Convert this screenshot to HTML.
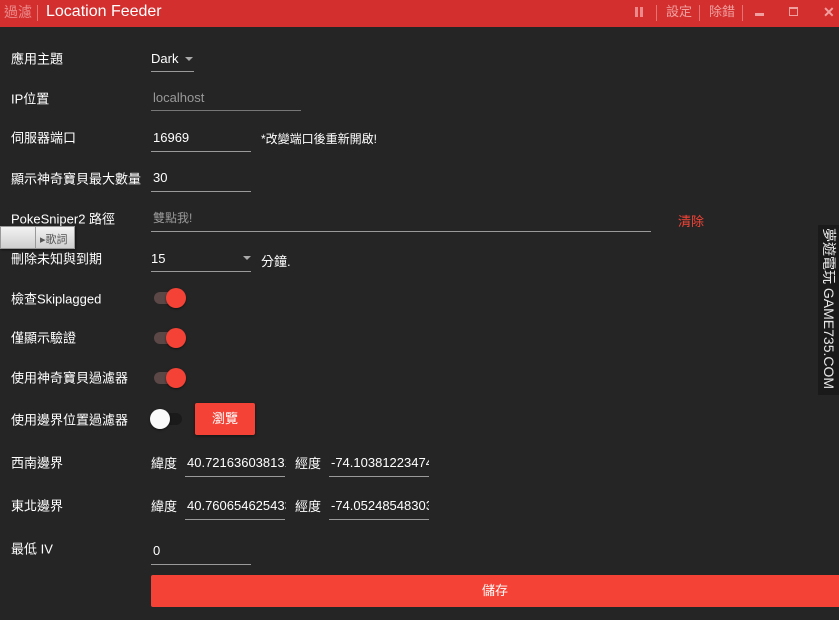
<!DOCTYPE html>
<html><head><meta charset="utf-8"><style>
*{margin:0;padding:0;box-sizing:border-box}
body{width:839px;height:620px;background:#252525;position:relative;overflow:hidden;font-family:"Liberation Sans","Noto Sans CJK TC",sans-serif;color:#fff;font-size:13px}
.a{position:absolute;white-space:nowrap}
.tb{position:absolute;left:0;top:0;width:839px;height:27px;background:#d32f2f}
.ul{position:absolute;height:1px;background:#9a9a9a}
.lbl{position:absolute;left:11px;transform:translateY(-50%)}
.tg{position:absolute;width:28px;height:12px;border-radius:6px;background:#5a4746}
.kn{position:absolute;width:20px;height:20px;border-radius:50%;background:#f44336;box-shadow:0 1px 2px rgba(0,0,0,.5)}
.sep{position:absolute;top:5px;width:1px;height:16px;background:#e57373}
.t{line-height:20px}
</style></head><body>
<div class="tb"></div>
<div class="a t" style="left:4px;top:2px;font-size:14px;color:#eb8a8a">過濾</div>
<div class="sep" style="left:37px"></div>
<div class="a t" style="left:46px;top:2px;font-size:16px;color:#fff">Location Feeder</div>
<div class="a" style="left:635px;top:7px;width:3px;height:10px;background:#eb8a8a"></div>
<div class="a" style="left:640px;top:7px;width:3px;height:10px;background:#eb8a8a"></div>
<div class="sep" style="left:656px"></div>
<div class="a t" style="left:666px;top:2px;font-size:13px;color:#f0a0a0">設定</div>
<div class="sep" style="left:699px"></div>
<div class="a t" style="left:709px;top:2px;font-size:13px;color:#f0a0a0">除錯</div>
<div class="sep" style="left:742px"></div>
<div class="a" style="left:755px;top:13px;width:9px;height:3px;background:#f0a0a0"></div>
<div class="a" style="left:789px;top:7px;width:9px;height:9px;border:1px solid #f0a0a0;border-top-width:2px"></div>
<div class="a t" style="left:823px;top:2px;font-size:14px;color:#f0a0a0;font-weight:bold">✕</div>

<div class="lbl" style="top:58px">應用主題</div>
<div class="a" style="left:151px;top:51px">Dark</div>
<div class="a" style="left:185px;top:57px;border:4px solid transparent;border-top:4px solid #aaa"></div>
<div class="ul" style="left:151px;top:71px;width:43px"></div>

<div class="lbl" style="top:98px">IP位置</div>
<div class="a" style="left:153px;top:90px;color:#999">localhost</div>
<div class="ul" style="left:151px;top:110px;width:150px;background:#777"></div>

<div class="lbl" style="top:137px">伺服器端口</div>
<div class="a" style="left:153px;top:130px">16969</div>
<div class="ul" style="left:151px;top:151px;width:100px"></div>
<div class="a" style="left:261px;top:130px;font-size:12px">*改變端口後重新開啟!</div>

<div class="lbl" style="top:178px">顯示神奇寶貝最大數量</div>
<div class="a" style="left:153px;top:170px">30</div>
<div class="ul" style="left:151px;top:191px;width:100px"></div>

<div class="lbl" style="top:218px">PokeSniper2 路徑</div>
<div class="a" style="left:153px;top:209px;color:#999;font-size:12px">雙點我!</div>
<div class="ul" style="left:151px;top:231px;width:500px"></div>
<div class="a" style="left:678px;top:211px;color:#f44336">清除</div>

<div class="a" style="left:0;top:226px;width:75px;height:23px;background:linear-gradient(#f2f2f2,#cfcfcf);border:1px solid #999;box-shadow:1px 1px 2px rgba(0,0,0,.5)"></div>
<div class="a" style="left:35px;top:227px;width:1px;height:21px;background:#999"></div>
<div class="a" style="left:40px;top:231px;font-size:11px;color:#555">▸歌詞</div>

<div class="lbl" style="top:258px">刪除未知與到期</div>
<div class="a" style="left:151px;top:251px">15</div>
<div class="a" style="left:243px;top:256px;border:4px solid transparent;border-top:4px solid #aaa"></div>
<div class="ul" style="left:151px;top:271px;width:100px"></div>
<div class="a" style="left:261px;top:251px">分鐘.</div>

<div class="lbl" style="top:298px">檢查Skiplagged</div>
<div class="tg" style="left:154px;top:292px"></div><div class="kn" style="left:166px;top:288px"></div>
<div class="lbl" style="top:337px">僅顯示驗證</div>
<div class="tg" style="left:154px;top:332px"></div><div class="kn" style="left:166px;top:328px"></div>
<div class="lbl" style="top:377px">使用神奇寶貝過濾器</div>
<div class="tg" style="left:154px;top:372px"></div><div class="kn" style="left:166px;top:368px"></div>
<div class="lbl" style="top:419px">使用邊界位置過濾器</div>
<div class="tg" style="left:154px;top:413px;background:#1a1a1a"></div><div class="kn" style="left:150px;top:409px;background:#fafafa"></div>
<div class="a" style="left:195px;top:403px;width:60px;height:32px;background:#f44336;border-radius:2px;box-shadow:0 1px 3px rgba(0,0,0,.5);text-align:center;line-height:32px">瀏覽</div>

<div class="lbl" style="top:462px">西南邊界</div>
<div class="a" style="left:151px;top:453px">緯度</div>
<div class="a" style="left:187px;top:455px;width:99px;overflow:hidden">40.721636038131</div>
<div class="ul" style="left:185px;top:476px;width:100px"></div>
<div class="a" style="left:295px;top:453px">經度</div>
<div class="a" style="left:331px;top:455px;width:98px;overflow:hidden">-74.103812234741</div>
<div class="ul" style="left:329px;top:476px;width:100px"></div>

<div class="lbl" style="top:505px">東北邊界</div>
<div class="a" style="left:151px;top:496px">緯度</div>
<div class="a" style="left:187px;top:498px;width:99px;overflow:hidden">40.760654625433</div>
<div class="ul" style="left:185px;top:519px;width:100px"></div>
<div class="a" style="left:295px;top:496px">經度</div>
<div class="a" style="left:331px;top:498px;width:98px;overflow:hidden">-74.052485483033</div>
<div class="ul" style="left:329px;top:519px;width:100px"></div>

<div class="lbl" style="top:548px">最低 IV</div>
<div class="a" style="left:153px;top:543px">0</div>
<div class="ul" style="left:151px;top:564px;width:100px"></div>

<div class="a" style="left:151px;top:575px;width:688px;height:32px;background:#f44336;border-radius:2px 0 0 2px;text-align:center;line-height:32px">儲存</div>

<div class="a" style="left:818px;top:225px;width:21px;height:170px;background:#1a1a1a"></div>
<div class="a" style="left:820px;top:228px;font-size:14px;color:#e8e8e8;transform-origin:0 0;transform:translate(19px,0) rotate(90deg)">夢遊電玩 GAME735.COM</div>
</body></html>
